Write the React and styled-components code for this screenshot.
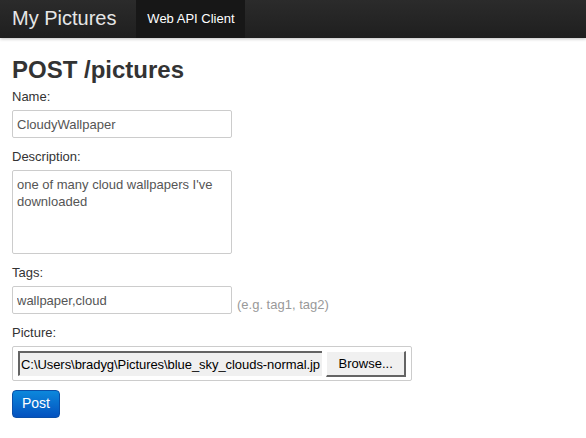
import styled, { createGlobalStyle } from 'styled-components';

const Global = createGlobalStyle`
  body {
    margin: 0;
    background: #ffffff;
    font-family: "Liberation Sans", Arial, sans-serif;
    color: #333333;
  }
`

const Navbar = styled.div`
  height: 38px;
  display: flex;
  align-items: stretch;
  padding-left: 12px;
  background-image: linear-gradient(to bottom, #2b2b2b, #1f1f1f);
  box-shadow: 0 1px 3px rgba(0,0,0,.25);
`

const Brand = styled.div`
  display: flex;
  align-items: center;
  padding-bottom: 2px;
  font-size: 20px;
  color: #e6e6e6;
  margin-right: 20px;
`

const NavItem = styled.div`
  display: flex;
  align-items: center;
  padding: 0 10px;
  width: 89px;
  justify-content: center;
  padding-bottom: 2px;
  font-size: 13px;
  color: ${p => p.active ? '#ffffff' : '#999999'};
  background: ${p => p.active ? '#171717' : 'transparent'};
`

const Page = styled.div`
  padding: 0 12px;
`

const Heading = styled.h2`
  margin: 17px 0 3px;
  font-size: 24px;
  line-height: 30px;
  font-weight: bold;
  color: #333333;
`

const Label = styled.label`
  display: block;
  font-size: 13px;
  line-height: 18px;
  color: #333333;
  margin-bottom: 4px;
`

const Field = styled.div`
  display: flex;
  align-items: center;
  margin-bottom: 10px;
`

const TextInput = styled.input`
  box-sizing: border-box;
  width: 220px;
  height: 28px;
  margin: 0;
  padding: 0 4px;
  border: 1px solid #cccccc;
  border-radius: 2px;
  font-family: inherit;
  font-size: 13px;
  color: #555555;
  background: #ffffff;
  outline: none;
`

const TextArea = styled.textarea`
  box-sizing: border-box;
  display: block;
  width: 220px;
  height: 84px;
  margin: 0;
  padding: 5px 4px;
  border: 1px solid #cccccc;
  border-radius: 2px;
  font-family: inherit;
  font-size: 13px;
  line-height: 17px;
  color: #555555;
  resize: none;
  outline: none;
`

const Hint = styled.span`
  margin-left: 5px;
  padding-top: 9px;
  font-size: 13px;
  color: #999999;
`

const FileBox = styled.div`
  box-sizing: border-box;
  width: 400px;
  height: 35px;
  display: flex;
  align-items: flex-start;
  gap: 4px;
  padding: 4px 5px 0 5px;
  border: 1px solid #cccccc;
  border-radius: 2px;
`

const FilePath = styled.div`
  box-sizing: border-box;
  width: 306px;
  height: 25px;
  display: flex;
  align-items: center;
  padding-left: 1px;
  overflow: hidden;
  white-space: nowrap;
  font-size: 13px;
  letter-spacing: -0.06px;
  color: #000000;
  background: #f0f0f0;
  border-top: 2px solid #646464;
  border-left: 2px solid #646464;
  border-bottom: 1px solid #f0f0f0;
`

const Browse = styled.div`
  box-sizing: border-box;
  width: 80px;
  height: 26px;
  display: flex;
  align-items: center;
  justify-content: center;
  font-size: 13px;
  color: #000000;
  background: #f0f0f0;
  border-top: 1px solid #ffffff;
  border-left: 1px solid #ffffff;
  border-right: 2px solid #646464;
  border-bottom: 2px solid #646464;
`

const PostButton = styled.button`
  box-sizing: border-box;
  width: 48px;
  height: 28px;
  margin-top: 9px;
  padding: 0 0 2px;
  border: 1px solid #0a4fa8;
  border-radius: 4px;
  background-image: linear-gradient(to bottom, #0c88dc, #0452bf);
  color: #ffffff;
  font-family: inherit;
  font-size: 14px;
  cursor: pointer;
`

export default function App() {
  return (
    <>
      <Global />
      <Navbar>
        <Brand>My Pictures</Brand>
        <NavItem active>Web API Client</NavItem>
      </Navbar>
      <Page>
        <Heading>POST /pictures</Heading>

        <Label>Name:</Label>
        <Field>
          <TextInput defaultValue="CloudyWallpaper" />
        </Field>

        <Label>Description:</Label>
        <Field>
          <TextArea defaultValue="one of many cloud wallpapers I've downloaded" />
        </Field>

        <Label>Tags:</Label>
        <Field>
          <TextInput defaultValue="wallpaper,cloud" />
          <Hint>(e.g. tag1, tag2)</Hint>
        </Field>

        <Label>Picture:</Label>
        <FileBox>
          <FilePath>C:\Users\bradyg\Pictures\blue_sky_clouds-normal.jp</FilePath>
          <Browse>Browse...</Browse>
        </FileBox>

        <PostButton>Post</PostButton>
      </Page>
    </>
  )
}
